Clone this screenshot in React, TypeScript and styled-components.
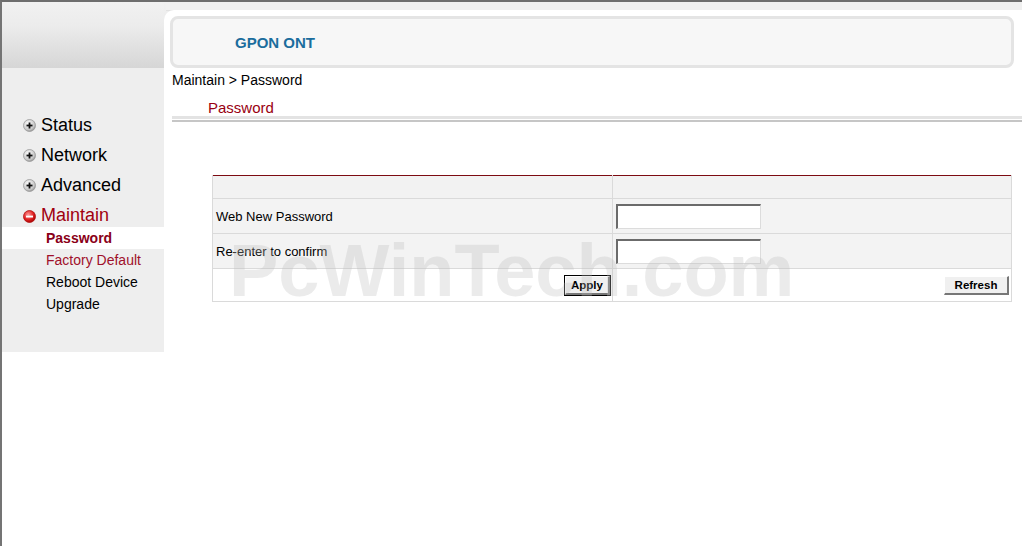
import React from "react";
import styled, { createGlobalStyle } from "styled-components";

const Global = createGlobalStyle`
  html, body { margin: 0; padding: 0; background: #fff; }
  body { font-family: "Liberation Sans", Arial, sans-serif; }
`;

const Frame = styled.div`
  position: relative;
  width: 1022px;
  height: 546px;
  box-sizing: border-box;
  border-top: 2px solid #6e6e6e;
  border-left: 2px solid #747474;
  display: grid;
  grid-template-columns: 162px 1fr;
  grid-template-rows: 66px 1fr;
  overflow: hidden;
`;

const Brand = styled.div`
  background: linear-gradient(#f1f1f1 0%, #ececec 35%, #d6d6d6 100%);
`;

const HeaderArea = styled.div`
  background: linear-gradient(#f0f0f0 0%, #ececec 35%, #d6d6d6 100%);
  display: flex;
  flex-direction: column;
`;

const HeaderStrip = styled.div`
  height: 8px;
  background: #f0f0f0;
  border-bottom: 1px solid #e2e2e2;
  margin-left: 2px;
`;

const WhitePanel = styled.div`
  flex: 1;
  background: #fff;
  border-top-left-radius: 10px;
  margin-top: -1px;
  padding: 6px 8px 0 6px;
  display: flex;
`;

const TitleBox = styled.div`
  flex: 1;
  height: 52px;
  box-sizing: border-box;
  border: 3px solid #e4e4e4;
  border-radius: 8px;
  background: #f7f7f7;
  display: flex;
  align-items: center;
  padding-left: 62px;
  font-weight: bold;
  font-size: 15px;
  color: #1b6d9d;
`;

const Sidebar = styled.div`
  display: flex;
  flex-direction: column;
`;

const Menu = styled.div`
  background: #eeeeee;
  height: 284px;
  padding-top: 42px;
  box-sizing: border-box;
`;

const MenuItem = styled.div<{ $active?: boolean; $h?: number }>`
  height: ${(p) => p.$h ?? 30}px;
  display: flex;
  align-items: ${(p) => (p.$h ? "flex-start" : "center")};
  padding-top: ${(p) => (p.$h ? 5 : 0)}px;
  box-sizing: border-box;
  padding-left: 21px;
  gap: 5px;
  font-size: 18px;
  color: ${(p) => (p.$active ? "#a00010" : "#000")};
  svg { flex: none; align-self: center; }
`;

const SubItem = styled.div<{ $current?: boolean; $tone?: "red" | "dark" }>`
  height: 22px;
  display: flex;
  align-items: center;
  padding-left: 44px;
  font-size: 14px;
  background: ${(p) => (p.$current ? "#fff" : "transparent")};
  font-weight: ${(p) => (p.$current ? "bold" : "normal")};
  color: ${(p) =>
    p.$current ? "#8a0018" : p.$tone === "red" ? "#a0102a" : "#000"};
`;

const Main = styled.div`
  display: flex;
  flex-direction: column;
  padding-left: 8px;
`;

const Crumb = styled.div`
  font-size: 14px;
  color: #000;
  height: 24px;
  display: flex;
  align-items: center;
`;

const PageTitle = styled.div`
  font-size: 15px;
  color: #990011;
  padding-left: 36px;
  height: 26px;
  display: flex;
  align-items: center;
  margin-top: 2px;
`;

const Rule = styled.div`
  height: 3px;
  background: #e3e3e3;
  border-bottom: 1px solid #fff;
  box-shadow: 0 2px 0 #c6c6c6;
  margin-top: -4px;
`;

const Table = styled.table`
  margin-top: 55px;
  margin-left: 40px;
  width: 800px;
  border-collapse: collapse;
  border-top: 1px solid #7d0b12;
  font-size: 13px;
  color: #000;
  td {
    border: 1px solid #dadada;
    padding: 0 0 0 3px;
  }
`;

const HeadRow = styled.tr`
  height: 23px;
  background: #f2f2f2;
  td { border-top: none; }
`;

const FieldRow = styled.tr`
  height: 35px;
  background: #f3f3f3;
`;

const ButtonRow = styled.tr`
  height: 33px;
  background: #fff;
  td { text-align: right; padding: 0 1px 0 0; }
`;

const LabelCell = styled.td`
  width: 396px;
`;

const TextInput = styled.input`
  width: 145px;
  height: 25px;
  box-sizing: border-box;
  border-top: 2px solid #6b6b6b;
  border-left: 2px solid #6b6b6b;
  border-right: 1px solid #dcdcdc;
  border-bottom: 1px solid #dcdcdc;
  background: #fff;
  display: block;
  margin-top: 1px;
`;

const Button = styled.button<{ $focus?: boolean; $w: number }>`
  width: ${(p) => p.$w}px;
  height: 19px;
  padding: 0;
  font-family: "Liberation Sans", Arial, sans-serif;
  font-weight: bold;
  font-size: 11.5px;
  color: #000;
  background: #f0f0f0;
  border-style: solid;
  border-width: 1px 2px 2px 1px;
  border-color: #fff #777 #777 #fff;
  outline: ${(p) => (p.$focus ? "1px solid #000" : "none")};
  outline-offset: 0;
  cursor: pointer;
  margin-top: 1px;
  margin-right: 1px;
`;

const Watermark = styled.div`
  position: absolute;
  left: 227px;
  top: 232px;
  font-size: 74px;
  line-height: 1;
  font-weight: bold;
  color: rgba(190, 190, 190, 0.3);
  pointer-events: none;
  white-space: nowrap;
`;

const PlusIcon = () => (
  <svg width="13" height="13" viewBox="0 0 13 13">
    <defs>
      <radialGradient id="gp" cx="40%" cy="35%" r="70%">
        <stop offset="0%" stopColor="#ffffff" />
        <stop offset="70%" stopColor="#c8c8c8" />
        <stop offset="100%" stopColor="#8a8a8a" />
      </radialGradient>
    </defs>
    <circle cx="6.5" cy="6.5" r="6" fill="url(#gp)" stroke="#9a9a9a" strokeWidth="0.8" />
    <rect x="3.5" y="5.6" width="6" height="1.8" fill="#111" />
    <rect x="5.6" y="3.5" width="1.8" height="6" fill="#111" />
  </svg>
);

const MinusIcon = () => (
  <svg width="13" height="13" viewBox="0 0 13 13">
    <defs>
      <radialGradient id="gm" cx="40%" cy="35%" r="70%">
        <stop offset="0%" stopColor="#ff9a9a" />
        <stop offset="60%" stopColor="#e02020" />
        <stop offset="100%" stopColor="#a00000" />
      </radialGradient>
    </defs>
    <circle cx="6.5" cy="6.5" r="6" fill="url(#gm)" stroke="#b01010" strokeWidth="0.8" />
    <rect x="3" y="5.6" width="7" height="1.9" fill="#fff" />
  </svg>
);

export default function App() {
  return (
    <>
      <Global />
      <Frame>
        <Brand />
        <HeaderArea>
          <HeaderStrip />
          <WhitePanel>
            <TitleBox>GPON ONT</TitleBox>
          </WhitePanel>
        </HeaderArea>
        <Sidebar>
          <Menu>
            <MenuItem><PlusIcon />Status</MenuItem>
            <MenuItem><PlusIcon />Network</MenuItem>
            <MenuItem><PlusIcon />Advanced</MenuItem>
            <MenuItem $active $h={27}><MinusIcon />Maintain</MenuItem>
            <SubItem $current>Password</SubItem>
            <SubItem $tone="red">Factory Default</SubItem>
            <SubItem>Reboot Device</SubItem>
            <SubItem>Upgrade</SubItem>
          </Menu>
        </Sidebar>
        <Main>
          <Crumb>Maintain &gt; Password</Crumb>
          <PageTitle>Password</PageTitle>
          <Rule />
          <Table>
            <tbody>
              <HeadRow>
                <LabelCell></LabelCell>
                <td></td>
              </HeadRow>
              <FieldRow>
                <LabelCell>Web New Password</LabelCell>
                <td><TextInput type="password" /></td>
              </FieldRow>
              <FieldRow>
                <LabelCell>Re-enter to confirm</LabelCell>
                <td><TextInput type="password" /></td>
              </FieldRow>
              <ButtonRow>
                <td><Button $focus $w={45}>Apply</Button></td>
                <td><Button $w={65}>Refresh</Button></td>
              </ButtonRow>
            </tbody>
          </Table>
        </Main>
        <Watermark>PcWinTech.com</Watermark>
      </Frame>
    </>
  );
}
